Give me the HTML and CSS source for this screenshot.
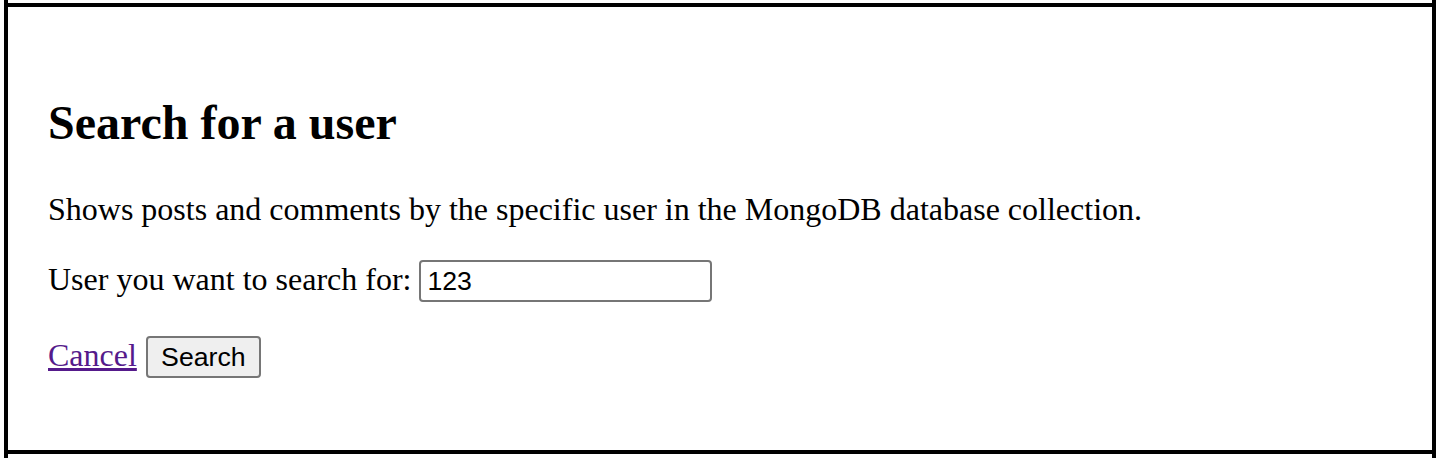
FILE: index.html
```html
<!DOCTYPE html>
<html lang="en">
<head>
<meta charset="utf-8">
<title>Search for a user</title>
<link rel="stylesheet" href="styles.css">
</head>
<body>
<div class="frame">
  <div class="panel">
    <h2 class="title">Search for a user</h2>
    <p class="intro">Shows posts and comments by the specific user in the MongoDB database collection.</p>
    <form class="search-form">
      <p class="field-row"><label for="user">User you want to search for:</label> <input id="user" class="text-input" type="text" value="123"></p>
      <p class="actions"><a class="cancel" href="#">Cancel</a> <button class="btn" type="button">Search</button></p>
    </form>
  </div>
</div>
</body>
</html>
```
FILE: styles.css
```css
html, body {
  margin: 0;
  padding: 0;
  background: #fff;
}
body {
  font-family: "Liberation Serif", "Times New Roman", serif;
  font-size: 32px;
  color: #000;
}
.frame {
  margin: 0 4px;
  height: 458px;
  box-sizing: border-box;
  border-left: 4px solid #000;
  border-right: 4px solid #000;
  padding-top: 3px;
  overflow: hidden;
}
.panel {
  height: 451px;
  box-sizing: border-box;
  border-top: 4px solid #000;
  border-bottom: 4px solid #000;
  padding: 0 40px;
  overflow: hidden;
}
.title {
  font-size: 48px;
  font-weight: bold;
  line-height: 55px;
  margin: 88px 0 0;
}
.intro {
  margin: 41px 0 0;
  line-height: 37px;
}
.search-form {
  margin: 0;
}
.field-row {
  margin: 32px 0 0;
  line-height: 37px;
}
.actions {
  margin: 34px 0 0;
  line-height: 37px;
}
.text-input {
  font-family: "Liberation Sans", Arial, sans-serif;
  font-size: 26.67px;
  width: 293px;
  height: 42px;
  box-sizing: border-box;
  padding: 2px 6px;
  margin: 0;
  border: 2px solid #767676;
  border-radius: 4px;
  color: #000;
  background: #fff;
  vertical-align: baseline;
}
.cancel {
  color: #551a8b;
  text-decoration: underline;
}
.btn {
  font-family: "Liberation Sans", Arial, sans-serif;
  font-size: 26.67px;
  height: 42px;
  width: 115px;
  box-sizing: border-box;
  padding: 0 12px;
  margin: 0 0 0 1px;
  border: 2px solid #767676;
  border-radius: 4px;
  background: #efefef;
  color: #000;
}
```
